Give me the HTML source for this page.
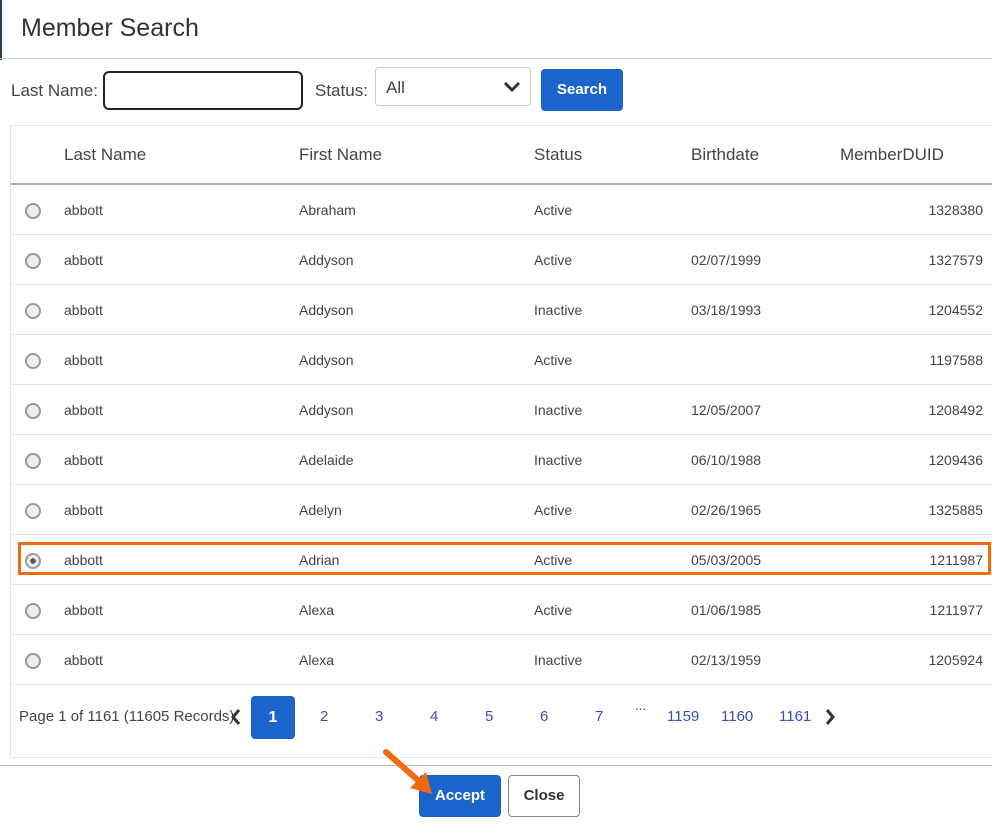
<!DOCTYPE html>
<html><head><meta charset="utf-8"><style>
*{box-sizing:border-box;margin:0;padding:0}
body{width:992px;height:824px;background:#fff;font-family:"Liberation Sans",sans-serif;color:#333;position:relative;overflow:hidden}
.abs{position:absolute}
.title{left:21px;top:14px;font-size:25px;color:#333}
.hl{left:0;top:58px;width:992px;height:1px;background:#ccc}
.lbl{font-size:17px;color:#444}
.inp{left:103px;top:71px;width:200px;height:39px;border:2px solid #222;border-radius:6px}
.sel{left:375px;top:67px;width:156px;height:39px;border:1px solid #ccc;border-radius:4px}
.btn{background:#1a64cc;color:#fff;font-weight:bold;font-size:15px;border-radius:4px;text-align:center}
.grid{left:10px;top:125px;width:982px;height:633px;border:1px solid #e6e6e6;border-right:none}
.th{font-size:17px;color:#444;top:145px}
.row{left:11px;width:981px;height:50px;border-bottom:1px solid #e4e4e4;font-size:14px;color:#444}
.row span{position:absolute;top:17px}
.radio{position:absolute;left:14px;top:18px;width:16px;height:16px;border-radius:50%;border:2px solid #999;background:#eee}
.pg{top:708px;font-size:15px;color:#3a50a8}
</style></head><body>
<div class="abs" style="left:0;top:0;width:2px;height:60px;background:#2a3a5a"></div>
<div class="abs title">Member Search</div>
<div class="abs hl"></div>
<div class="abs lbl" style="left:11px;top:81px">Last Name:</div>
<div class="abs inp"></div>
<div class="abs lbl" style="left:315px;top:81px">Status:</div>
<div class="abs sel"><span style="position:absolute;left:10px;top:10px;font-size:17px;color:#444">All</span>
<svg style="position:absolute;right:9px;top:13px" width="18" height="12" viewBox="0 0 18 12"><path d="M2 2 L9 9 L16 2" stroke="#333" stroke-width="3" fill="none"/></svg></div>
<div class="abs btn" style="left:541px;top:69px;width:82px;height:42px;line-height:42px">Search</div>
<div class="abs grid"></div>
<div class="abs th" style="left:64px">Last Name</div>
<div class="abs th" style="left:299px">First Name</div>
<div class="abs th" style="left:534px">Status</div>
<div class="abs th" style="left:691px">Birthdate</div>
<div class="abs th" style="left:840px">MemberDUID</div>
<div class="abs" style="left:11px;top:183px;width:981px;height:2px;background:#aaa"></div>

<div class="abs row" style="top:185px"><div class="radio"></div><span style="left:53px">abbott</span><span style="left:288px">Abraham</span><span style="left:523px">Active</span><span style="left:680px"></span><span style="right:9px">1328380</span></div>
<div class="abs row" style="top:235px"><div class="radio"></div><span style="left:53px">abbott</span><span style="left:288px">Addyson</span><span style="left:523px">Active</span><span style="left:680px">02/07/1999</span><span style="right:9px">1327579</span></div>
<div class="abs row" style="top:285px"><div class="radio"></div><span style="left:53px">abbott</span><span style="left:288px">Addyson</span><span style="left:523px">Inactive</span><span style="left:680px">03/18/1993</span><span style="right:9px">1204552</span></div>
<div class="abs row" style="top:335px"><div class="radio"></div><span style="left:53px">abbott</span><span style="left:288px">Addyson</span><span style="left:523px">Active</span><span style="left:680px"></span><span style="right:9px">1197588</span></div>
<div class="abs row" style="top:385px"><div class="radio"></div><span style="left:53px">abbott</span><span style="left:288px">Addyson</span><span style="left:523px">Inactive</span><span style="left:680px">12/05/2007</span><span style="right:9px">1208492</span></div>
<div class="abs row" style="top:435px"><div class="radio"></div><span style="left:53px">abbott</span><span style="left:288px">Adelaide</span><span style="left:523px">Inactive</span><span style="left:680px">06/10/1988</span><span style="right:9px">1209436</span></div>
<div class="abs row" style="top:485px"><div class="radio"></div><span style="left:53px">abbott</span><span style="left:288px">Adelyn</span><span style="left:523px">Active</span><span style="left:680px">02/26/1965</span><span style="right:9px">1325885</span></div>
<div class="abs row" style="top:535px"><div class="radio" style="background:radial-gradient(circle,#555 0 2.5px,#eee 3px)"></div><span style="left:53px">abbott</span><span style="left:288px">Adrian</span><span style="left:523px">Active</span><span style="left:680px">05/03/2005</span><span style="right:9px">1211987</span></div>
<div class="abs row" style="top:585px"><div class="radio"></div><span style="left:53px">abbott</span><span style="left:288px">Alexa</span><span style="left:523px">Active</span><span style="left:680px">01/06/1985</span><span style="right:9px">1211977</span></div>
<div class="abs row" style="top:635px"><div class="radio"></div><span style="left:53px">abbott</span><span style="left:288px">Alexa</span><span style="left:523px">Inactive</span><span style="left:680px">02/13/1959</span><span style="right:9px">1205924</span></div>
<div class="abs" style="left:18px;top:542px;width:973px;height:33px;border:3px solid #f26a0f"></div>

<div class="abs" style="left:19px;top:708px;font-size:15px;color:#444">Page 1 of 1161 (11605 Records)</div>
<svg class="abs" style="left:229px;top:708px" width="14" height="18" viewBox="0 0 14 18"><path d="M10 2 L4 9 L10 16" stroke="#333" stroke-width="3" fill="none"/></svg>
<div class="abs btn" style="left:251px;top:696px;width:44px;height:43px;line-height:43px;font-size:16px">1</div>
<div class="abs pg" style="left:320px">2</div>
<div class="abs pg" style="left:375px">3</div>
<div class="abs pg" style="left:430px">4</div>
<div class="abs pg" style="left:485px">5</div>
<div class="abs pg" style="left:540px">6</div>
<div class="abs pg" style="left:595px">7</div>
<div class="abs" style="left:635px;top:698px;font-size:13px;color:#333">...</div>
<div class="abs pg" style="left:667px">1159</div>
<div class="abs pg" style="left:721px">1160</div>
<div class="abs pg" style="left:779px">1161</div>
<svg class="abs" style="left:823px;top:708px" width="14" height="18" viewBox="0 0 14 18"><path d="M4 2 L10 9 L4 16" stroke="#333" stroke-width="3" fill="none"/></svg>

<div class="abs" style="left:0;top:765px;width:992px;height:1px;background:#bbb"></div>
<div class="abs btn" style="left:419px;top:775px;width:82px;height:42px;line-height:42px">Accept</div>
<div class="abs" style="left:508px;top:775px;width:72px;height:42px;line-height:40px;border:1px solid #888;border-radius:4px;text-align:center;font-weight:bold;font-size:15px;color:#333">Close</div>
<svg class="abs" style="left:380px;top:748px" width="60" height="50" viewBox="0 0 60 50"><path d="M6 4 L40 34" stroke="#f26a0f" stroke-width="6" stroke-linecap="round"/><path d="M30 40 L52 46 L46 24 Z" fill="#f26a0f"/></svg>
</body></html>
